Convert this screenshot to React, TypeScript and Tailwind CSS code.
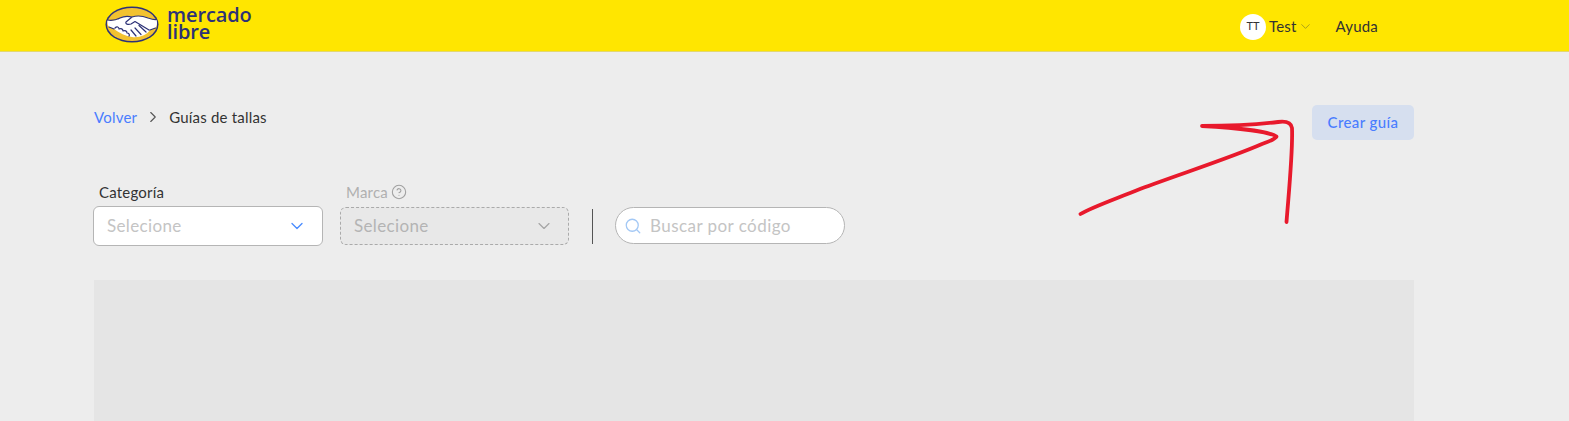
import { ChevronDown, ChevronRight, CircleHelp, Search } from "lucide-react";

function Logo() {
  return (
    <div className="flex items-center gap-[8px]">
      <svg width="54" height="37" viewBox="0 0 54 37">
        <ellipse cx="27" cy="18.5" rx="26.5" ry="18" fill="#2d3277" />
        <ellipse cx="27" cy="18.5" rx="25" ry="16.5" fill="#f2c230" />
        <path d="M2.5 14 C8 15 11 14 15 12 C20 9 24 10 27 11 C33 9 38 10 43 12 C46 13 49 14 51.5 13.5 C52.5 17 52 20 50.5 22 L45 24 C42 29 34 32 27 31 C21 30 14 27 9 23 L4 21 C2.5 19 2 16 2.5 14Z" fill="#fff" />
        <path d="M2.5 14 C8 15 11 14 15 12 C19 10 23 10 27 11 C33 9 38 10 43 12 C46 13 49 14 51.5 13.5 M9 23 L4 21 M15 12 L13 13 M27 11 L21 16 C20 18 23 19 26 18 L30 15.5 L44 24 M45 24 L50.5 22 M34 19.5 L41 26 M30 22 L36 28.5 M26 24 L31 30 M10 22 C12 20 14 21 14 23 C16 22 18 23 18 25 C20 24 22 25 22 27 C24 27 25 29 24 30" fill="none" stroke="#2d3277" strokeWidth="1.2" strokeLinecap="round" strokeLinejoin="round" />
      </svg>
      <div className="-mt-[3px] text-[20px] leading-[17px] font-semibold tracking-[-0.1px] text-[#2d3277] [font-family:'Open_Sans',sans-serif]">
        <div>mercado</div>
        <div>libre</div>
      </div>
    </div>
  );
}

function Header() {
  return (
    <header className="flex h-[52px] items-center justify-between border-b border-[#e3d870] bg-[#ffe600] pr-[191px] pl-[105px]">
      <div className="-mt-[3px]">
        <Logo />
      </div>
      <div className="mt-[2px] flex items-center text-[15px] tracking-[0.2px] text-[#333]">
        <span className="flex h-[26px] w-[26px] items-center justify-center rounded-full bg-white text-[11px] tracking-normal">TT</span>
        <span className="ml-[3px]">Test</span>
        <ChevronDown size={15} strokeWidth={1} className="ml-[1px] text-[#77772a]" />
        <span className="ml-[23px]">Ayuda</span>
      </div>
    </header>
  );
}

function Arrow() {
  return (
    <svg className="absolute top-[115px] left-[1075px]" width="225" height="112" viewBox="1075 115 225 112">
      <path
        d="M1080.5 214 C1090 208 1110 201 1140 189 C1180 174 1230 158 1262 144 C1270 141 1277 138 1276.5 136.5 C1270 132 1240 128 1202 126 C1230 126 1262 124 1278 122 C1286 121 1291 122 1292 128 C1293 150 1289 190 1286.5 222"
        fill="none"
        stroke="#e8192c"
        strokeWidth="3.8"
        strokeLinecap="round"
        strokeLinejoin="round"
      />
    </svg>
  );
}

export default function App() {
  return (
    <div className="relative h-[421px] overflow-hidden bg-[#ededed] font-['Lato',sans-serif] text-[15px] tracking-[0.2px] text-[#333]">
      <Header />
      <main className="ml-[94px] w-[1320px]">
        <div className="flex items-start justify-between pt-[53px]">
          <div className="flex h-[24px] items-center">
            <span className="text-[#4a7dff]">Volver</span>
            <ChevronRight size={18} strokeWidth={1.5} className="mr-[7px] ml-[7px] text-[#555]" />
            <span>Guías de tallas</span>
          </div>
          <button className="h-[35px] w-[102px] rounded-[5px] bg-[#d6dfef] font-medium tracking-[0.4px] text-[#4a7dff]">
            Crear guía
          </button>
        </div>

        <div className="mt-[42px] -ml-px flex items-start">
          <div className="w-[230px]">
            <div className="mb-[4px] pl-[6px] leading-[20px]">Categoría</div>
            <div className="flex h-[40px] items-center justify-between rounded-[6px] border border-[#b5b5b5] bg-white pr-[15px] pl-[13px] text-[17px] tracking-[0.35px] text-[#c4c4c4]">
              Selecione
              <ChevronDown size={20} strokeWidth={1.6} className="text-[#4a8cff]" />
            </div>
          </div>
          <div className="ml-[17px] w-[229px]">
            <div className="mb-[5px] flex items-center gap-[3px] pl-[6px] leading-[20px] text-[#b0b0b0]">
              Marca
              <CircleHelp size={16} strokeWidth={1.6} className="text-[#a0a0a0]" />
            </div>
            <div className="flex h-[38px] items-center justify-between rounded-[6px] border border-dashed border-[#aaa] bg-[#e8e8e8] pr-[14px] pl-[13px] text-[17px] tracking-[0.35px] text-[#b4b4b4]">
              Selecione
              <ChevronDown size={20} strokeWidth={1.4} className="text-[#a5a5a5]" />
            </div>
          </div>
          <div className="mt-[27px] ml-[23px] h-[35px] w-px bg-[#555]" />
          <div className="mt-[25px] ml-[22px] flex h-[37px] w-[230px] items-center rounded-full border border-[#b5b5b5] bg-white pl-[8px] text-[17px] tracking-[0.45px] text-[#c4c4c4]">
            <Search size={18} strokeWidth={1.7} className="text-[#a3c8f5]" />
            <span className="ml-[8px]">Buscar por código</span>
          </div>
        </div>

        <div className="mt-[34px] h-[141px] bg-[#e5e5e5]" />
      </main>
      <Arrow />
    </div>
  );
}
